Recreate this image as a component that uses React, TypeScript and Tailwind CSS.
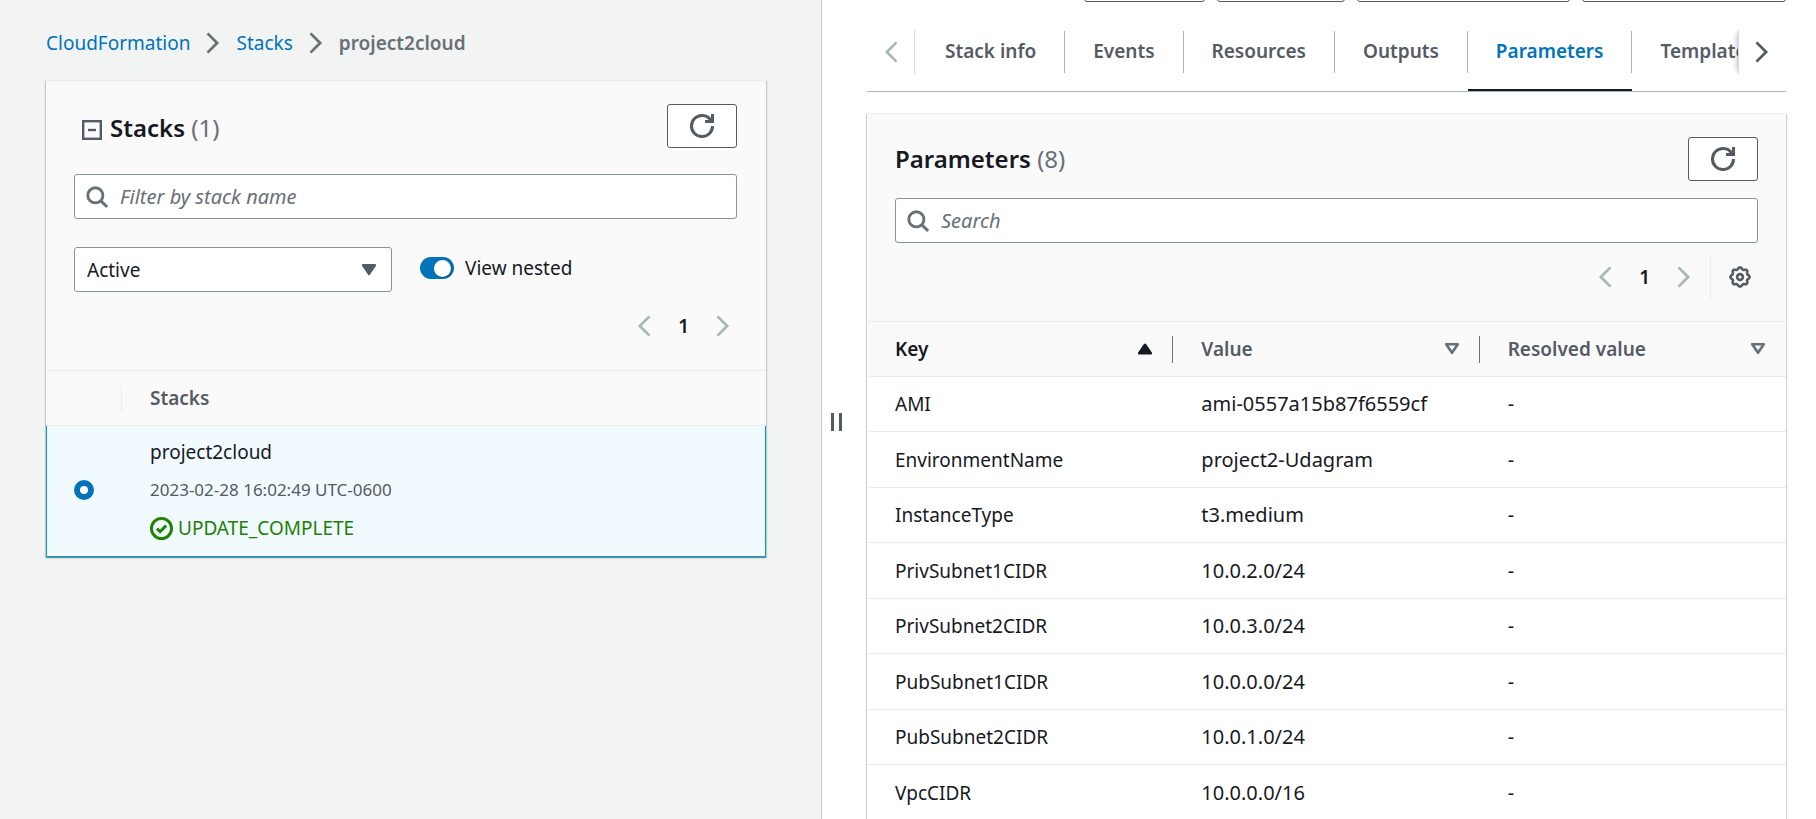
import type { ReactNode } from 'react'

type IconProps = { path: string; className?: string }

function Icon({ path, className = '' }: IconProps) {
  return (
    <svg
      viewBox="0 0 16 16"
      className={`size-[22px] shrink-0 ${className}`}
      fill="none"
      stroke="currentColor"
      strokeWidth="2"
      aria-hidden="true"
    >
      <path d={path} />
    </svg>
  )
}

const ANGLE_RIGHT = 'm4 1 7 7-7 7'
const ANGLE_LEFT = 'M12 1 5 8l7 7'

function RefreshIcon() {
  return (
    <svg viewBox="0 0 16 16" className="size-6" fill="none" stroke="currentColor" strokeWidth="2" aria-hidden="true">
      <path d="M10 5h5V0" />
      <path d="M15 8a6.96 6.96 0 0 1-7 7 6.96 6.96 0 0 1-7-7 6.96 6.96 0 0 1 7-7 6.87 6.87 0 0 1 6.3 4" />
    </svg>
  )
}

function SearchIcon() {
  return (
    <svg viewBox="0 0 16 16" className="size-[22px] shrink-0 text-[#687078]" fill="none" stroke="currentColor" strokeWidth="2.1" aria-hidden="true">
      <circle cx="6.8" cy="6.8" r="5.5" />
      <path d="m10.8 10.8 4.6 4.4" />
    </svg>
  )
}

// Eight-lobed outline sampled in polar coordinates.
const GEAR_POINTS = Array.from({ length: 96 }, (_, i) => {
  const angle = (i / 96) * Math.PI * 2
  const radius = 8.7 + 0.9 * Math.cos(8 * angle)
  return `${(11 + radius * Math.cos(angle)).toFixed(2)},${(11 + radius * Math.sin(angle)).toFixed(2)}`
}).join(' ')

function GearIcon() {
  return (
    <svg viewBox="0 0 22 22" className="size-[22px]" fill="none" stroke="currentColor" aria-hidden="true">
      <polygon points={GEAR_POINTS} strokeWidth="2.6" strokeLinejoin="round" />
      <circle cx="11" cy="11" r="2.9" strokeWidth="2.6" />
    </svg>
  )
}

const CARETS = {
  up: 'M5.2 15.2h11.6L11 6.8z',
  down: 'M5.2 6.2h11.6L11 14.8z',
}

function Caret({ direction = 'down', filled = false, className = '' }: { direction?: 'up' | 'down'; filled?: boolean; className?: string }) {
  return (
    <svg
      viewBox="0 0 22 22"
      className={`size-[22px] shrink-0 ${className}`}
      fill={filled ? 'currentColor' : 'none'}
      stroke="currentColor"
      strokeWidth="2.6"
      strokeLinejoin="round"
      aria-hidden="true"
    >
      <path d={CARETS[direction]} />
    </svg>
  )
}

function RefreshButton() {
  return (
    <button
      type="button"
      aria-label="Refresh"
      className="flex h-11 w-[70px] shrink-0 items-center justify-center rounded-[3px] border border-[#545b64] bg-white text-[#545b64]"
    >
      <RefreshIcon />
    </button>
  )
}

function SearchBox({ label }: { label: string }) {
  return (
    <label className="flex h-[45px] items-center gap-3 rounded-[3px] border border-[#879596] bg-white px-[11px]">
      <SearchIcon />
      <input
        type="text"
        aria-label={label}
        placeholder={label}
        className="min-w-0 flex-1 bg-transparent text-[20px] outline-none placeholder:text-[#687078] placeholder:italic"
      />
    </label>
  )
}

function Pagination() {
  return (
    <nav aria-label="Pagination" className="flex h-11 items-center gap-[23px] text-[#aab7b8]">
      <button type="button" aria-label="Previous page">
        <Icon path={ANGLE_LEFT} />
      </button>
      <button type="button" aria-label="Page 1" className="font-semibold text-[#16191f]">
        1
      </button>
      <button type="button" aria-label="Next page">
        <Icon path={ANGLE_RIGHT} />
      </button>
    </nav>
  )
}

function Card({ children }: { children: ReactNode }) {
  return (
    <section className="border-t border-[#eaeded] bg-white shadow-[0_1px_1px_0_rgba(0,28,36,0.3),1px_1px_1px_0_rgba(0,28,36,0.15),-1px_1px_1px_0_rgba(0,28,36,0.15)]">
      {children}
    </section>
  )
}

function StacksPanel() {
  return (
    <Card>
      <div className="bg-[#fafafa] pt-[23px] pr-[29px] pb-[22px] pl-7">
        <div className="flex justify-between">
          <h2 className="flex items-center gap-2 pt-1 pl-2 text-[24px] font-semibold">
            <button type="button" aria-label="Collapse stacks" className="pt-1 text-[#545b64]">
              <svg viewBox="0 0 20 20" className="size-5" fill="none" stroke="currentColor" strokeWidth="2.4" aria-hidden="true">
                <rect x="1.2" y="1.2" width="17.6" height="17.6" />
                <path d="M6 10h8" />
              </svg>
            </button>
            <span>
              Stacks <span className="font-normal text-[#687078]">(1)</span>
            </span>
          </h2>
          <RefreshButton />
        </div>
        <div className="mt-[26px]">
          <SearchBox label="Filter by stack name" />
        </div>
        <div className="mt-7 flex items-center gap-7">
          <div className="relative flex w-[318px] items-center">
            <select
              aria-label="Stack status"
              className="h-[45px] w-full appearance-none rounded-[3px] border border-[#879596] bg-white px-3"
            >
              <option>Active</option>
            </select>
            <Caret filled className="pointer-events-none absolute right-3 text-[#545b64]" />
          </div>
          <label className="flex items-center gap-[11px] pb-[3px]">
            <input
              type="checkbox"
              role="switch"
              defaultChecked
              className="flex h-[22px] w-[34px] appearance-none items-center rounded-full bg-[#879596] px-[3px] before:block before:size-[17px] before:rounded-full before:bg-white before:shadow-[1px_1px_1px_rgba(0,0,0,0.3)] before:content-[''] checked:justify-end checked:bg-[#0073bb]"
            />
            View nested
          </label>
        </div>
        <div className="mt-3 flex justify-end pr-[3px]">
          <Pagination />
        </div>
      </div>
      <table className="w-full border-collapse text-left">
        <thead className="bg-[#fafafa]">
          <tr className="h-[55px] border-y border-[#eaeded]">
            <th className="w-[76px] p-0">
              <div className="h-[27px] border-r border-[#eaeded]" />
            </th>
            <th className="px-7 font-semibold text-[#545b64]">Stacks</th>
          </tr>
        </thead>
      </table>
      <label className="flex items-center border border-t-0 border-[#00a1c9] bg-[#f1faff] pt-[7px] pr-7 pb-[9px] pl-[27px]">
        <input
          type="radio"
          name="stack"
          defaultChecked
          className="size-5 appearance-none rounded-full border border-[#879596] bg-white checked:border-[6px] checked:border-[#0073bb]"
        />
        <span className="flex flex-col pl-[56px] leading-[38px]">
          <span>project2cloud</span>
          <span className="text-[17px] text-[#545b64]">2023-02-28 16:02:49 UTC-0600</span>
          <span className="flex items-center gap-[5px] text-[#1d8102]">
            <svg viewBox="0 0 16 16" className="size-[23px]" fill="none" stroke="currentColor" strokeWidth="2" aria-hidden="true">
              <circle cx="8" cy="8" r="7" />
              <path d="m4.8 8 2.2 2.2 4.2-4.2" />
            </svg>
            UPDATE_COMPLETE
          </span>
        </span>
      </label>
    </Card>
  )
}

const TABS = ['Stack info', 'Events', 'Resources', 'Outputs', 'Parameters', 'Template']

function Tabs() {
  return (
    <div className="flex items-start border-b border-[#aab7b8]">
      <button type="button" aria-label="Scroll tabs left" className="mt-7 flex h-11 w-12 shrink-0 items-center justify-end border-r border-[#d5dbdb] pr-3 text-[#aab7b8]">
        <Icon path={ANGLE_LEFT} />
      </button>
      <div role="tablist" className="flex min-w-0 flex-1 overflow-hidden pl-[2px]">
        {TABS.map((tab) => (
          <button
            key={tab}
            type="button"
            role="tab"
            aria-selected={tab === 'Parameters'}
            className="shrink-0 border-b-2 border-transparent pt-[29px] pb-4 font-semibold text-[#545b64] aria-selected:border-[#16191f] aria-selected:text-[#0073bb]"
          >
            <span className="flex h-[42px] items-center border-r border-[#aab7b8] px-7 pb-[2px]">{tab}</span>
          </button>
        ))}
      </div>
      <button type="button" aria-label="Scroll tabs right" className="mt-7 flex h-11 w-12 shrink-0 items-center border-l border-[#d5dbdb] pl-3 text-[#545b64] shadow-[-5px_0_4px_-3px_rgba(0,28,36,0.2)]">
        <Icon path={ANGLE_RIGHT} />
      </button>
    </div>
  )
}

const PARAMETERS = [
  ['AMI', 'ami-0557a15b87f6559cf'],
  ['EnvironmentName', 'project2-Udagram'],
  ['InstanceType', 't3.medium'],
  ['PrivSubnet1CIDR', '10.0.2.0/24'],
  ['PrivSubnet2CIDR', '10.0.3.0/24'],
  ['PubSubnet1CIDR', '10.0.0.0/24'],
  ['PubSubnet2CIDR', '10.0.1.0/24'],
  ['VpcCIDR', '10.0.0.0/16'],
]

const COLUMNS = ['Key', 'Value', 'Resolved value']

function ParametersPanel() {
  return (
    <Card>
      <div className="bg-[#fafafa] px-7 pt-[23px] pb-[22px]">
        <div className="flex items-center justify-between">
          <h2 className="text-[24px] font-semibold">
            Parameters <span className="font-normal text-[#687078]">(8)</span>
          </h2>
          <RefreshButton />
        </div>
        <div className="mt-[17px]">
          <SearchBox label="Search" />
        </div>
        <div className="mt-3 flex justify-end">
          <Pagination />
          <button type="button" aria-label="Preferences" className="ml-[15px] flex h-11 items-center border-l border-[#eaeded] pr-[7px] pl-[18px] text-[#545b64]">
            <GearIcon />
          </button>
        </div>
      </div>
      <table className="w-full table-fixed border-collapse text-left">
        <thead className="bg-[#fafafa]">
          <tr className="h-[55px] border-y border-[#eaeded]">
            {COLUMNS.map((column, i) => (
              <th
                key={column}
                aria-sort={i === 0 ? 'ascending' : 'none'}
                className="group p-0 font-semibold text-[#545b64] first:text-[#16191f]"
              >
                <button type="button" className="flex h-[27px] w-full items-center justify-between border-r border-[#687078] pr-4 pl-7 group-last:border-transparent">
                  {column}
                  {i === 0 ? <Caret direction="up" filled /> : <Caret className="text-[#687078]" />}
                </button>
              </th>
            ))}
          </tr>
        </thead>
        <tbody>
          {PARAMETERS.map(([key, value]) => (
            <tr key={key} className="border-b border-[#eaeded] odd:h-[55px] even:h-[56px]">
              <td className="px-7">{key}</td>
              <td className="px-7 text-[20px]">{value}</td>
              <td className="px-7 text-[20px]">-</td>
            </tr>
          ))}
        </tbody>
      </table>
    </Card>
  )
}

export default function App() {
  return (
    <div className="grid h-screen grid-cols-[822fr_994fr] overflow-hidden bg-white font-['Noto_Sans','Open_Sans',sans-serif] text-[19px] leading-[26px] text-[#16191f]">
      <aside className="min-w-0 overflow-hidden border-r border-[#c4c8c8] bg-[#f2f3f3] pr-[55px] pl-[46px]">
        <nav aria-label="Breadcrumb" className="flex h-20 items-center gap-3 pt-[6px] text-[#687078]">
          <a href="#cloudformation" className="text-[#0073bb]">CloudFormation</a>
          <Icon path={ANGLE_RIGHT} />
          <a href="#stacks" className="text-[#0073bb]">Stacks</a>
          <Icon path={ANGLE_RIGHT} />
          <span className="font-semibold">project2cloud</span>
        </nav>
        <StacksPanel />
      </aside>
      <div className="flex min-w-0 overflow-hidden">
        <button type="button" aria-label="Resize panels" className="flex w-[45px] shrink-0 items-center gap-[5px] pt-6 pl-[9px]">
          <span className="h-[18px] w-[3px] bg-[#545b64]" />
          <span className="h-[18px] w-[3px] bg-[#545b64]" />
        </button>
        <main className="min-w-0 flex-1 pr-[30px]">
          <div className="flex h-[2px] items-end justify-end gap-3 overflow-hidden">
            <button type="button" aria-label="Delete" className="h-11 w-[121px] rounded-[3px] border border-[#545b64]" />
            <button type="button" aria-label="Update" className="h-11 w-[128px] rounded-[3px] border border-[#545b64]" />
            <button type="button" aria-label="Stack actions" className="h-11 w-[213px] rounded-[3px] border border-[#545b64]" />
            <button type="button" aria-label="Create stack" className="h-11 w-[204px] rounded-[3px] border border-[#545b64]" />
          </div>
          <Tabs />
          <div className="pt-[21px]">
            <ParametersPanel />
          </div>
        </main>
      </div>
    </div>
  )
}
